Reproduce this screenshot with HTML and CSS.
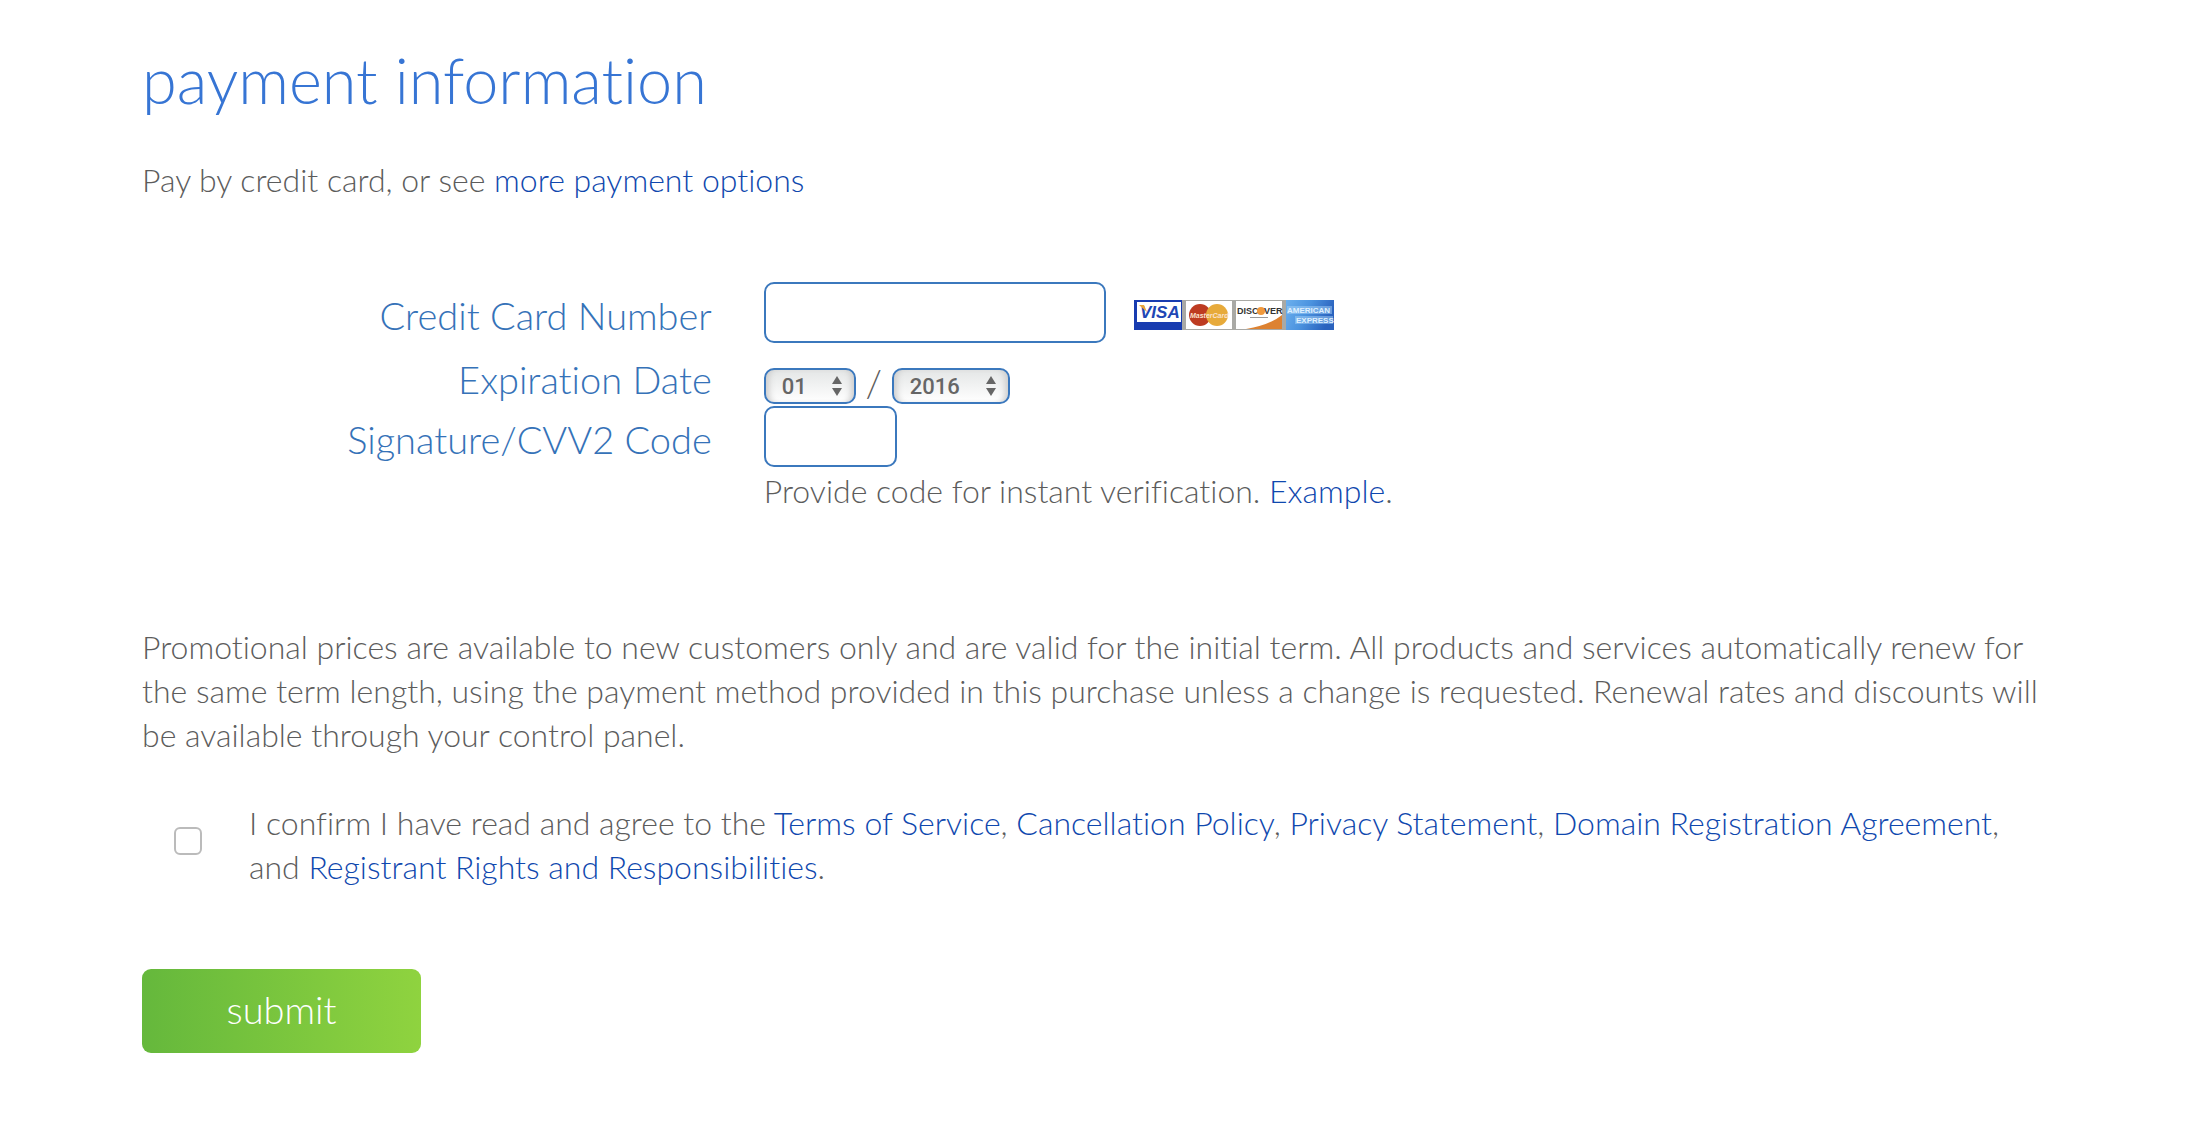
FILE: index.html
```html
<!DOCTYPE html>
<html lang="en">
<head>
<meta charset="utf-8">
<meta name="viewport" content="width=device-width, initial-scale=1">
<title>Payment information</title>
<link rel="stylesheet" href="styles.css">
</head>
<body>
<main class="page">
  <h1 class="title">payment information</h1>
  <p class="intro">Pay by credit card, or see <a href="#options">more payment options</a></p>

  <form class="payment">
    <div class="fields">
      <label class="label" for="card">Credit Card Number</label>
      <div class="control control-card">
        <input class="input" id="card" type="text" autocomplete="cc-number">
        <svg class="cards" viewBox="0 0 200 30" role="img" aria-label="Visa, MasterCard, Discover, American Express">
          <defs>
            <linearGradient id="amex" x1="0" y1="0" x2="1" y2="0.3">
              <stop offset="0" stop-color="#6cb0ee"/>
              <stop offset="0.5" stop-color="#4b93df"/>
              <stop offset="1" stop-color="#2a62be"/>
            </linearGradient>
          </defs>
          <rect width="200" height="30" fill="#a9a9a5"/>
          <rect width="48" height="30" fill="#183cb0"/>
          <rect x="3" y="2" width="44" height="20" fill="#fff"/>
          <text class="visa" x="6" y="18">VISA</text>
          <path d="M5 5h5l3 7z" fill="#e8a33a"/>
          <rect x="52" y="1" width="46" height="28" fill="#fff"/>
          <circle cx="66" cy="15" r="11" fill="#bd3b21"/>
          <circle cx="83" cy="15" r="11" fill="#e7aa3a"/>
          <text class="mc" x="56" y="18">MasterCard</text>
          <rect x="102" y="1" width="46" height="28" fill="#fff"/>
          <path d="M112 29q24-4 36-14v14z" fill="#dd8231"/>
          <text class="disc" x="103" y="14">DISC</text>
          <circle cx="127" cy="11" r="4" fill="#f0993c"/>
          <text class="disc" x="130" y="14">VER</text>
          <path d="M116 17.500h18" stroke="#999"/>
          <rect x="152" width="48" height="30" fill="url(#amex)"/>
          <rect x="153" y="6" width="45" height="8" fill="#a4d0f5" opacity="0.500"/>
          <rect x="161" y="16" width="38" height="8" fill="#a4d0f5" opacity="0.500"/>
          <text class="amex" x="153" y="13">AMERICAN</text>
          <text class="amex" x="162" y="23">EXPRESS</text>
        </svg>
      </div>

      <label class="label label-date" for="month">Expiration Date</label>
      <div class="control control-date">
        <span class="select">
          <select id="month" aria-label="Expiration month"><option>01</option><option>02</option><option>03</option></select>
          <svg class="arrows" viewBox="0 0 10 20" aria-hidden="true"><path d="M5 0l5 8H0zM5 20l5-8H0z"/></svg>
        </span>
        <span class="slash">/</span>
        <span class="select select-year">
          <select id="year" aria-label="Expiration year"><option>2016</option><option>2017</option><option>2018</option></select>
          <svg class="arrows" viewBox="0 0 10 20" aria-hidden="true"><path d="M5 0l5 8H0zM5 20l5-8H0z"/></svg>
        </span>
      </div>

      <label class="label" for="cvv">Signature/CVV2 Code</label>
      <div class="control">
        <input class="input input-short" id="cvv" type="text" autocomplete="cc-csc">
      </div>

      <p class="hint">Provide code for instant verification. <a href="#example">Example</a>.</p>
    </div>

    <p class="terms">Promotional prices are available to new customers only and are valid for the initial term. All products and services automatically renew for the same term length, using the payment method provided in this purchase unless a change is requested. Renewal rates and discounts will be available through your control panel.</p>

    <div class="confirm">
      <input class="check" id="agree" type="checkbox">
      <label for="agree">I confirm I have read and agree to the <a href="#tos">Terms of Service</a>, <a href="#cancel">Cancellation Policy</a>, <a href="#privacy">Privacy Statement</a>, <a href="#domain">Domain Registration Agreement</a>, and <a href="#rights">Registrant Rights and Responsibilities</a>.</label>
    </div>

    <button class="submit" type="submit">submit</button>
  </form>
</main>
</body>
</html>
```
FILE: styles.css
```css
* {
  box-sizing: border-box;
}

body {
  margin: 0;
  background: #fff;
  color: #5c5c5c;
  font-family: Lato, "Open Sans", sans-serif;
  font-size: 32px;
  font-variant-ligatures: none;
  font-weight: 300;
  line-height: 44px;
}

h1,
p {
  margin: 0;
}

a {
  color: #0f48ae;
  text-decoration: none;
}

.page {
  padding: 44px 140px 72px 142px;
}

.title {
  color: #3775d4;
  font-size: 63px;
  font-weight: 300;
  line-height: 72px;
}

.intro {
  margin-top: 42px;
}

.fields {
  display: grid;
  grid-template-columns: 30% 1fr;
  column-gap: 47px;
  align-items: center;
  margin-top: 80px;
}

.label {
  padding: 4px 5px 0 0;
  color: #3572b8;
  font-size: 38px;
  text-align: right;
}

.label-date {
  padding-top: 8px;
}

.control {
  display: flex;
  align-items: center;
}

.control-card {
  gap: 28px;
}

.control-date {
  align-items: flex-end;
  height: 63px;
  padding-bottom: 2px;
}

.input {
  width: 342px;
  height: 61px;
  padding: 0 12px;
  border: 2px solid #3b78bd;
  border-radius: 10px;
  background: #fff;
  color: #666;
  font: inherit;
}

.input-short {
  width: 133px;
}

.cards {
  width: 200px;
  height: 30px;
  margin-top: 4px;
}

.visa,
.mc,
.disc,
.amex {
  font-family: "Liberation Sans", sans-serif;
  font-weight: 700;
}

.visa {
  fill: #2046b4;
  font-size: 17px;
  font-style: italic;
}

.mc {
  fill: #fbe3cf;
  font-size: 7px;
  font-style: italic;
}

.disc {
  fill: #333;
  font-size: 9px;
}

.amex {
  fill: #dff0ff;
  font-size: 8px;
}

.select {
  display: grid;
  align-items: center;
  width: 92px;
  height: 36px;
}

.select-year {
  width: 118px;
}

.select select,
.arrows {
  grid-area: 1 / 1;
}

.select select {
  width: 100%;
  height: 36px;
  padding: 0 0 0 16px;
  border: 2px solid #3b78bd;
  border-radius: 10px;
  appearance: none;
  background: linear-gradient(#e4e6e6, #fff);
  box-shadow: inset 7px 0 6px -4px #ccc, inset -7px 0 6px -4px #ccc;
  color: #666;
  font: 500 22px Roboto, sans-serif;
}

.arrows {
  justify-self: end;
  width: 10px;
  height: 20px;
  margin-right: 14px;
  fill: #666;
  pointer-events: none;
}

.slash {
  width: 36px;
  font-size: 38px;
  text-align: center;
}

.hint {
  grid-column: 2;
  margin-top: 2px;
}

.terms {
  margin-top: 112px;
}

.confirm {
  display: flex;
  align-items: flex-start;
  gap: 47px;
  margin-top: 44px;
  padding-left: 32px;
}

.check {
  flex: none;
  width: 28px;
  height: 28px;
  margin: 26px 0 0;
  border: 2px solid #bbb;
  border-radius: 6px;
  appearance: none;
  background: #fff;
}

.submit {
  display: block;
  width: 279px;
  height: 84px;
  margin-top: 80px;
  padding: 0 0 4px;
  border: 0;
  border-radius: 9px;
  background: linear-gradient(90deg, #65b83c, #8fd33f);
  color: #fff;
  font: inherit;
  font-size: 38px;
}
```
